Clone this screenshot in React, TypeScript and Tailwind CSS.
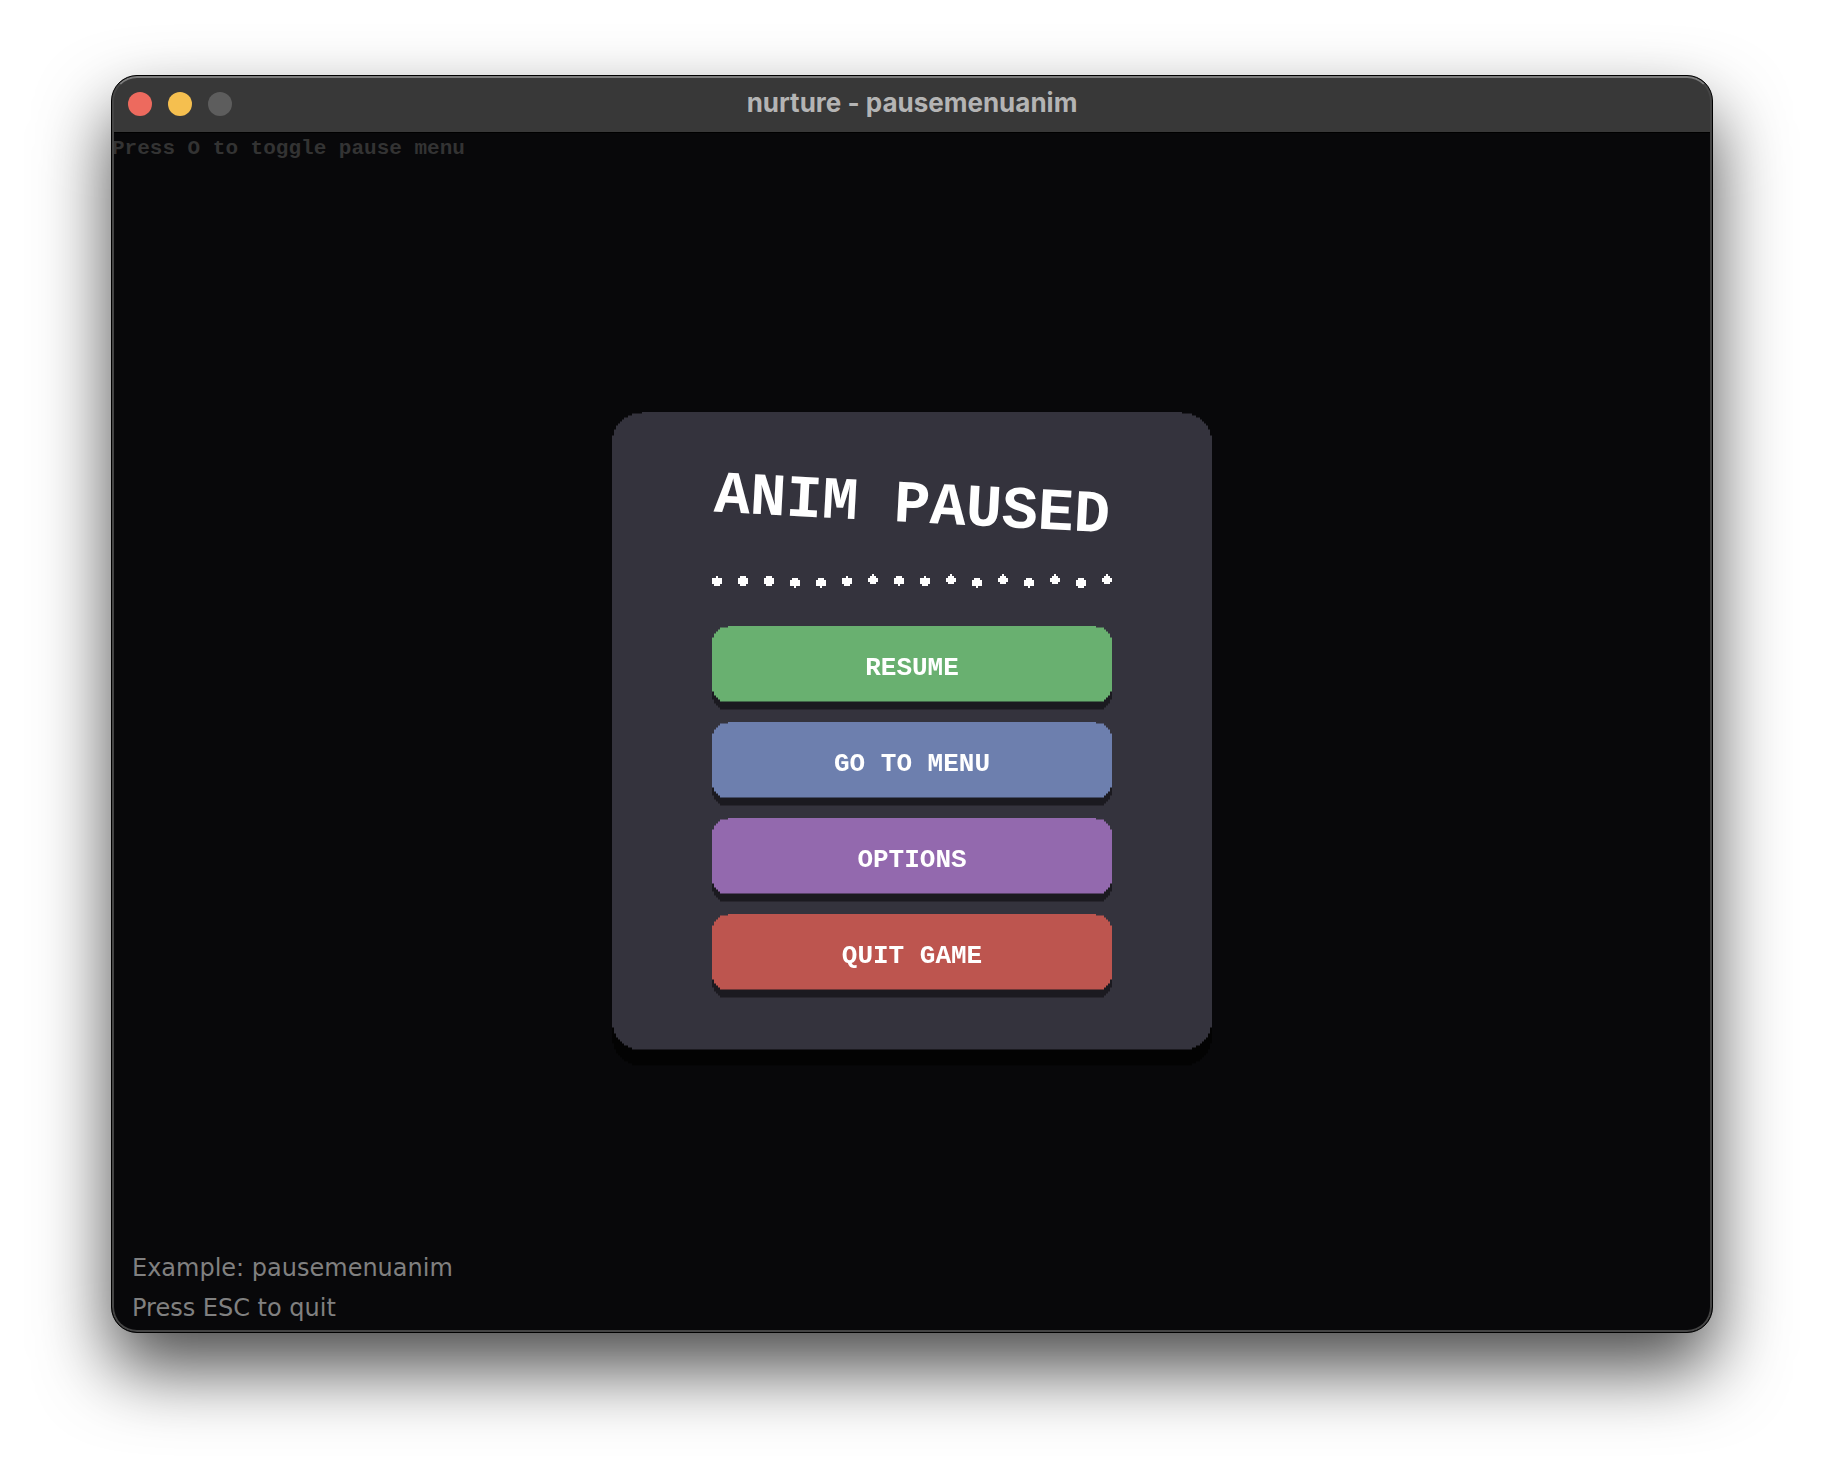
import React from "react";

const CELL = 2;

// Builds a rectangle whose corners are stepped in square cells.
// Each list holds the inset of every row, counted from the outer edge inwards.
function steppedCorners(top: number[], bottom: number[]): string {
  const left: string[] = [];
  const right: string[] = [];
  const add = (inset: number, y: string) => {
    left.push(`${inset * CELL}px ${y}`);
    right.push(`calc(100% - ${inset * CELL}px) ${y}`);
  };
  top.forEach((inset, row) => {
    add(inset, `${row * CELL}px`);
    add(inset, `${(row + 1) * CELL}px`);
  });
  add(0, `${top.length * CELL}px`);
  add(0, `calc(100% - ${bottom.length * CELL}px)`);
  for (let row = bottom.length - 1; row >= 0; row--) {
    add(bottom[row], `calc(100% - ${(row + 1) * CELL}px)`);
    add(bottom[row], `calc(100% - ${row * CELL}px)`);
  }
  return `polygon(${[...right, ...left.reverse()].join(", ")})`;
}

const panelShape = steppedCorners(
  [15, 10, 8, 6, 5, 4, 3, 2, 2, 1, 1, 1],
  [10, 8, 6, 5, 4, 3, 2, 2, 1, 1, 1],
);
const buttonShape = steppedCorners([8, 4, 3, 2, 1, 1], [4, 3, 2, 1, 1]);

// Width in cells of each of the seven rows of a divider dot.
const DOTS: Record<string, number[]> = {
  tipped: [0, 1, 5, 5, 5, 3, 0],
  round: [0, 3, 5, 5, 5, 3, 0],
  roundLow: [0, 0, 3, 5, 5, 5, 3],
  dropLow: [0, 0, 3, 5, 5, 5, 1],
  drop: [0, 3, 5, 5, 5, 1, 0],
  high: [1, 3, 5, 5, 3, 0, 0],
};

const DIVIDER = [
  "tipped", "round", "round", "dropLow", "dropLow", "tipped", "high", "drop",
  "tipped", "high", "dropLow", "high", "dropLow", "high", "roundLow", "high",
];

function Divider() {
  return (
    <svg
      viewBox="0 0 400 14"
      className="mt-10 block w-full"
      shapeRendering="crispEdges"
      fill="#ffffff"
      aria-hidden="true"
    >
      {DIVIDER.map((kind, i) =>
        DOTS[kind].map((width, row) =>
          width > 0 ? (
            <rect
              key={`${i}-${row}`}
              x={i * 26 + 5 - width}
              y={row * CELL}
              width={width * CELL}
              height={CELL}
            />
          ) : null,
        ),
      )}
    </svg>
  );
}

const ACTIONS = [
  { label: "RESUME", color: "bg-[#69b070]" },
  { label: "GO TO MENU", color: "bg-[#6d7fae]" },
  { label: "OPTIONS", color: "bg-[#9369ae]" },
  { label: "QUIT GAME", color: "bg-[#bd554f]" },
];

function MenuButton({ label, color }: { label: string; color: string }) {
  return (
    <button
      type="button"
      className="block w-full cursor-pointer drop-shadow-[0_8px_0_#1b1a20]"
    >
      <span
        className={`flex h-[76px] items-center justify-center pt-2 text-[26px] leading-8 font-bold text-white ${color}`}
        style={{ clipPath: buttonShape }}
      >
        {label}
      </span>
    </button>
  );
}

function PauseMenu() {
  return (
    <div className="drop-shadow-[0_16px_0_#030303]">
      <section
        aria-label="Pause menu"
        className="w-[600px] bg-[#34333d] px-[100px] pt-[64px] pb-[60px] font-['Liberation_Mono',monospace]"
        style={{ clipPath: panelShape }}
      >
        <h1 className="rotate-3 text-center text-[60px] leading-[60px] font-bold whitespace-nowrap text-white">
          ANIM PAUSED
        </h1>
        <div className="-mt-[2px]">
          <Divider />
        </div>
        <div className="mt-[38px] flex flex-col gap-5">
          {ACTIONS.map((action) => (
            <MenuButton key={action.label} {...action} />
          ))}
        </div>
      </section>
    </div>
  );
}

function TitleBar() {
  return (
    <header className="grid h-14 grid-cols-[1fr_auto_1fr] items-center bg-[#383838] px-4">
      <div className="flex gap-4">
        <button type="button" aria-label="Close" className="size-6 rounded-full bg-[#ed6a5e]" />
        <button type="button" aria-label="Minimize" className="size-6 rounded-full bg-[#f5bf4f]" />
        <button type="button" aria-label="Zoom" disabled className="size-6 rounded-full bg-[#5d5d5d]" />
      </div>
      <div className="pb-[2px] font-['Inter',sans-serif] text-[26px] leading-8 font-bold text-[#b4b4b4]">
        nurture - pausemenuanim
      </div>
    </header>
  );
}

export default function App() {
  return (
    <div className="flex min-h-screen bg-white px-[111px] pt-[75px] pb-[147px]">
      <div className="relative flex flex-1 flex-col overflow-hidden rounded-[26px] border border-black bg-[#08080a] shadow-[0_36px_72px_rgba(0,0,0,0.7)]">
        <TitleBar />
        <main className="grid flex-1 grid-rows-[1fr_auto_1fr] justify-items-center border-t border-black pb-1">
          <p className="justify-self-start pt-1 font-['Liberation_Mono',monospace] text-[21px] leading-6 font-bold text-[#333333]">
            Press O to toggle pause menu
          </p>
          <PauseMenu />
          <div className="self-end justify-self-start pl-5 font-['DejaVu_Sans',sans-serif] text-2xl leading-10 text-[#808080]">
            <p>Example: pausemenuanim</p>
            <p>Press ESC to quit</p>
          </div>
        </main>
        <div className="pointer-events-none absolute inset-0 rounded-[25px] border-2 border-[#454545] border-t-[#7c7c7c]" />
      </div>
    </div>
  );
}
